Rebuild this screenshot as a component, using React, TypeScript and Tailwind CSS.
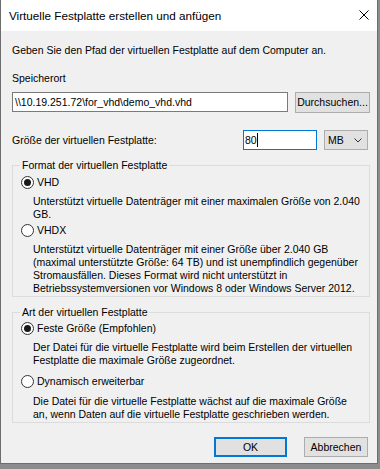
import React from 'react';

const Radio: React.FC<{ checked?: boolean; label: string; className?: string }> = ({ checked, label, className }) => (
  <div className={`flex items-center h-[13px] gap-[3px] ${className ?? ''}`}>
    <span className="w-[13px] h-[13px] rounded-full border border-[#333333] bg-white flex items-center justify-center shrink-0">
      {checked && <span className="w-[7px] h-[7px] rounded-full bg-[#1a1a1a]" />}
    </span>
    <span className="whitespace-nowrap">{label}</span>
  </div>
);

const GroupBox: React.FC<{ title: string; className?: string; children: React.ReactNode }> = ({ title, className, children }) => (
  <div className={`border border-[#dcdcdc] pl-[8px] pb-[1px] ${className ?? ''}`}>
    <div className="-mt-[7px] -ml-[1px] px-[2px] w-fit bg-[#f0f0f0] whitespace-nowrap">{title}</div>
    {children}
  </div>
);

const App: React.FC = () => {
  return (
    <div className="w-[380px] h-[469px] bg-[#8c8c8c] font-['Liberation_Sans',Arial,sans-serif] text-black">
      <div className="w-[378px] h-[464px] bg-[#f0f0f0] border-l border-r border-b border-[#6d6d6d] flex flex-col">
        {/* title bar */}
        <div className="h-[31px] bg-white flex items-center justify-between pl-[8px] pr-[8px]">
          <span className="text-[11.7px] leading-[15px] whitespace-nowrap">Virtuelle Festplatte erstellen und anfügen</span>
          <svg width="10" height="10" viewBox="0 0 10 10" className="mb-[1px]">
            <path d="M0.5 0.5 L9.5 9.5 M9.5 0.5 L0.5 9.5" stroke="#000" strokeWidth="1" fill="none" />
          </svg>
        </div>

        <div className="pl-[11px] pr-[7px] text-[10.5px] leading-[13px]">
          <div className="mt-[13px] whitespace-nowrap">Geben Sie den Pfad der virtuellen Festplatte auf dem Computer an.</div>

          <div className="mt-[15px]">Speicherort</div>
          <div className="mt-[7px] flex items-start h-[21px]">
            <div className="w-[276px] h-[20px] border border-[#7a7a7a] bg-white flex items-center pl-[2px] whitespace-nowrap">
              \\10.19.251.72\for_vhd\demo_vhd.vhd
            </div>
            <button className="ml-auto w-[75px] h-[21px] border border-[#adadad] bg-[#e1e1e1] flex items-center justify-center whitespace-nowrap">
              Durchsuchen...
            </button>
          </div>

          <div className="mt-[17px] flex items-center h-[20px]">
            <span className="flex-1 whitespace-nowrap">Größe der virtuellen Festplatte:</span>
            <div className="w-[74px] h-[20px] border border-[#0078d7] bg-white flex items-center pl-[1px]">
              <span>80</span>
              <span className="w-[1px] h-[14px] bg-black" />
            </div>
            <div className="ml-[7px] mr-[2px] w-[44px] h-[20px] border border-[#adadad] bg-[#e1e1e1] flex items-center pl-[3px] pr-[5px] justify-between">
              <span>MB</span>
              <svg width="8" height="5" viewBox="0 0 8 5">
                <path d="M0.5 0.5 L4 4 L7.5 0.5" stroke="#333" strokeWidth="1" fill="none" />
              </svg>
            </div>
          </div>

          <GroupBox title="Format der virtuellen Festplatte" className="mt-[15px]">
            <Radio checked label="VHD" className="mt-[4px]" />
            <div className="mt-[6px] ml-[12px] whitespace-nowrap">
              Unterstützt virtuelle Datenträger mit einer maximalen Größe von 2.040<br />
              GB.
            </div>
            <Radio label="VHDX" className="mt-[3px]" />
            <div className="mt-[6px] ml-[12px] whitespace-nowrap">
              Unterstützt virtuelle Datenträger mit einer Größe über 2.040 GB<br />
              (maximal unterstützte Größe: 64 TB) und ist unempfindlich gegenüber<br />
              Stromausfällen. Dieses Format wird nicht unterstützt in<br />
              Betriebssystemversionen vor Windows 8 oder Windows Server 2012.
            </div>
          </GroupBox>

          <GroupBox title="Art der virtuellen Festplatte" className="mt-[15px]">
            <Radio checked label="Feste Größe (Empfohlen)" className="mt-[3px]" />
            <div className="mt-[6px] ml-[12px] whitespace-nowrap">
              Der Datei für die virtuelle Festplatte wird beim Erstellen der virtuellen<br />
              Festplatte die maximale Größe zugeordnet.
            </div>
            <Radio label="Dynamisch erweiterbar" className="mt-[8px]" />
            <div className="mt-[7px] ml-[12px] whitespace-nowrap">
              Die Datei für die virtuelle Festplatte wächst auf die maximale Größe<br />
              an, wenn Daten auf die virtuelle Festplatte geschrieben werden.
            </div>
          </GroupBox>

          <div className="mt-[14px] flex justify-end gap-[17px] pr-[2px]">
            <button className="w-[73px] h-[20px] border-2 border-[#0078d7] bg-[#e1e1e1] flex items-center justify-center">OK</button>
            <button className="w-[64px] h-[20px] border border-[#adadad] bg-[#e1e1e1] flex items-center justify-center">Abbrechen</button>
          </div>
        </div>
      </div>
    </div>
  );
};

export default App;
